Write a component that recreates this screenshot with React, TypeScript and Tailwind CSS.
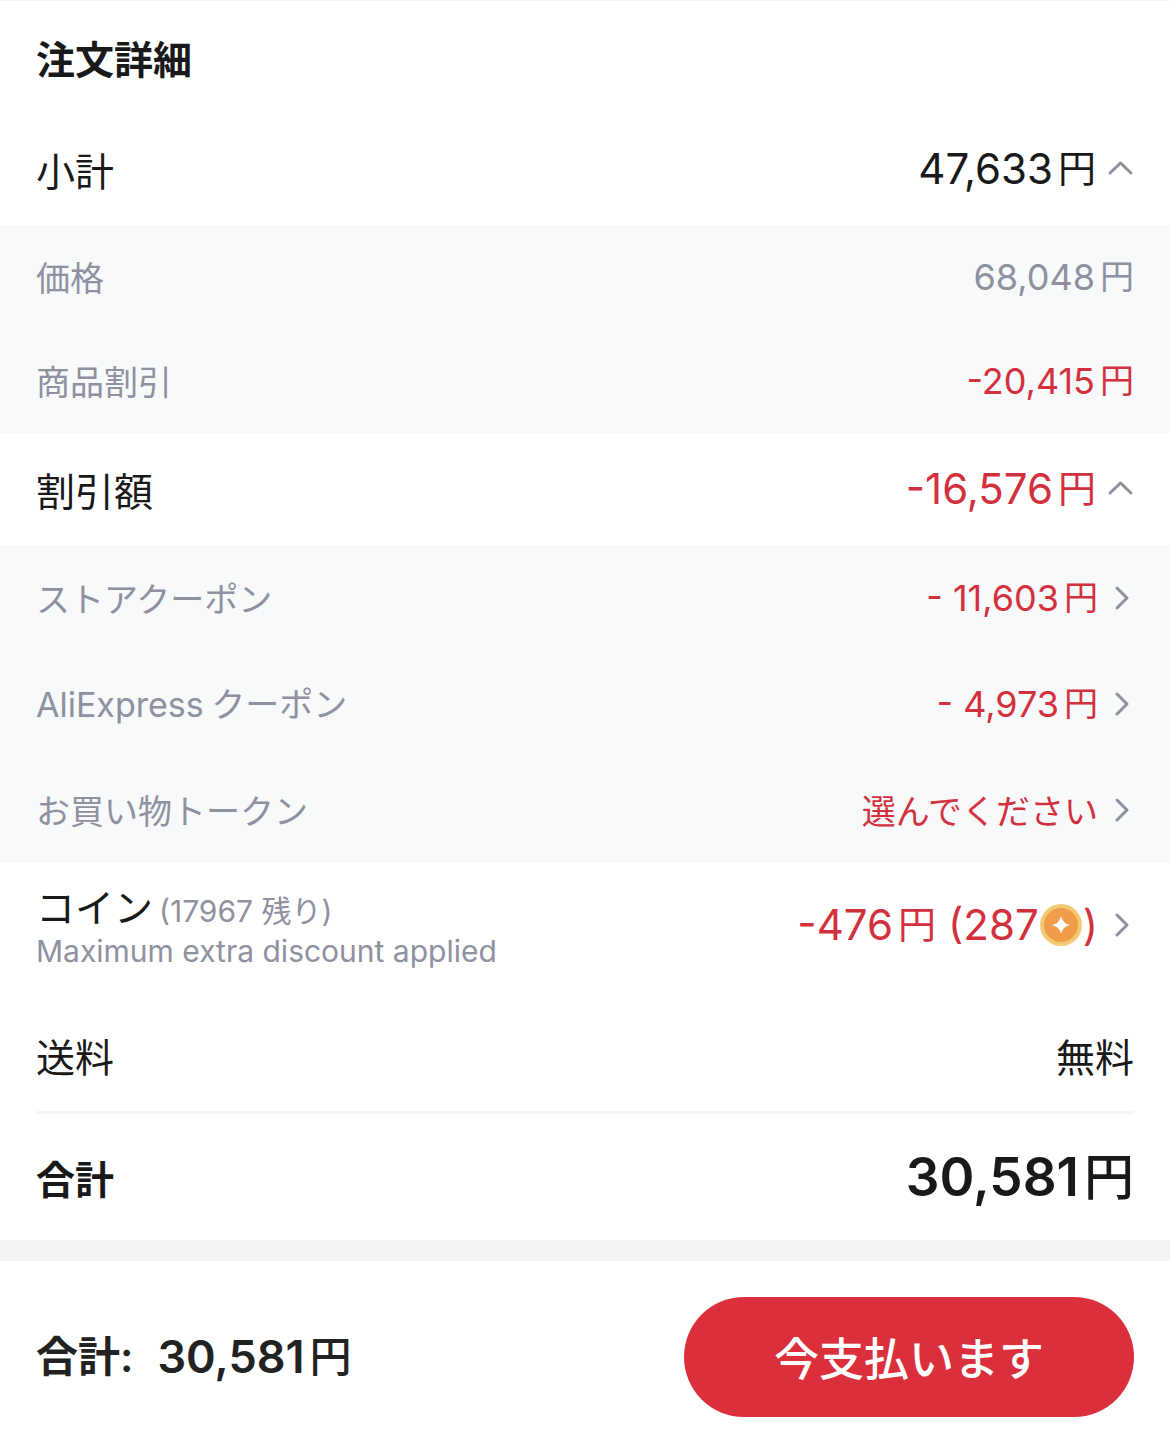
import type {ReactNode} from "react"

type Direction = "up" | "right"

function Chevron({direction}: {direction: Direction}) {
  return (
    <svg
      aria-hidden="true"
      className="h-7 w-7 shrink-0 text-[#8f909d]"
      fill="none"
      stroke="currentColor"
      strokeLinecap="round"
      strokeLinejoin="round"
      strokeWidth={3}
      viewBox="0 0 28 28"
    >
      <path d={direction === "up" ? "M4 18 14.5 8 25 18" : "M11 4 21 14 11 24"} />
    </svg>
  )
}

function Coin() {
  return (
    <svg aria-hidden="true" className="h-11 w-11 shrink-0" viewBox="0 0 44 44">
      <circle cx="22" cy="22" fill="#f3ca73" r="21" />
      <circle cx="22" cy="22" fill="#f09c49" r="17" />
      <path
        d="M22 13Q23.5 20.5 31 22Q23.5 23.5 22 31Q20.5 23.5 13 22Q20.5 20.5 22 13Z"
        fill="#fff"
      />
    </svg>
  )
}

/* Amount followed by the smaller yen character */
function Yen({amount, size}: {amount: string; size: string}) {
  return (
    <span className="flex items-center gap-[5px] whitespace-nowrap">
      <span>{amount}</span>
      <span className={size}>円</span>
    </span>
  )
}

/* Japanese captions use the metrics of the CJK face */
function Label({children, className}: {children: ReactNode; className: string}) {
  return (
    <span className={`font-['Noto_Sans_CJK_JP',sans-serif] ${className}`}>
      {children}
    </span>
  )
}

interface RowProps {
  children: ReactNode
  label: ReactNode
}

function SummaryRow({children, label}: RowProps) {
  return (
    <div className="flex h-28 items-center justify-between px-9">
      <Label className="text-[39px]">{label}</Label>
      <button className="flex items-center gap-2.5 text-[42px]" type="button">
        {children}
        <Chevron direction="up" />
      </button>
    </div>
  )
}

function DetailRow({children, label}: RowProps) {
  return (
    <div className="flex h-[104px] items-center justify-between px-9">
      <Label className="text-[34px] text-[#8f90a0]">{label}</Label>
      <span className="text-[36px]">{children}</span>
    </div>
  )
}

function CouponRow({children, label}: RowProps) {
  return (
    <button
      className="flex h-[106px] w-full items-center justify-between px-9"
      type="button"
    >
      <Label className="text-[34px] text-[#8f90a0]">{label}</Label>
      <span className="flex items-center gap-2 text-[36px] text-[#d3303e]">
        {children}
        <Chevron direction="right" />
      </span>
    </button>
  )
}

export default function App() {
  return (
    <main className="min-h-screen border-t border-[#f4f4f4] bg-white font-[Inter,'Noto_Sans_CJK_JP',sans-serif] leading-tight text-[#191919]">
      <h1 className="flex h-28 items-center px-9 font-bold">
        <Label className="text-[39px]">注文詳細</Label>
      </h1>

      <SummaryRow label="小計">
        <Yen amount="47,633" size="text-[38px]" />
      </SummaryRow>
      <section className="bg-[#f8f9fb]">
        <DetailRow label="価格">
          <span className="text-[#8f90a0]">
            <Yen amount="68,048" size="text-[34px]" />
          </span>
        </DetailRow>
        <DetailRow label="商品割引">
          <span className="text-[#d3303e]">
            <Yen amount="-20,415" size="text-[34px]" />
          </span>
        </DetailRow>
      </section>

      <SummaryRow label="割引額">
        <span className="text-[#d3303e]">
          <Yen amount="-16,576" size="text-[38px]" />
        </span>
      </SummaryRow>
      <section className="bg-[#f8f9fb]">
        <CouponRow label="ストアクーポン">
          <Yen amount="- 11,603" size="text-[34px]" />
        </CouponRow>
        <CouponRow
          label={
            <>
              <span className="font-[Inter,sans-serif]">AliExpress</span>{" "}
              クーポン
            </>
          }
        >
          <Yen amount="- 4,973" size="text-[34px]" />
        </CouponRow>
        <CouponRow label="お買い物トークン">
          <Label className="text-[34px]">選んでください</Label>
        </CouponRow>
      </section>

      <button
        className="flex h-[136px] w-full items-center justify-between px-9 pb-3 text-left"
        type="button"
      >
        <span className="pt-2">
          <span className="flex items-baseline gap-1.5 leading-10">
            <span className="text-[39px]">コイン</span>
            <span className="text-[30px] text-[#8f90a0]">(17967 残り)</span>
          </span>
          <span className="block text-[30px] leading-10 text-[#8f90a0]">
            Maximum extra discount applied
          </span>
        </span>
        <span className="flex items-center gap-2 text-[42px] text-[#d3303e]">
          <span className="flex items-center">
            <Yen amount="-476" size="text-[38px]" />
            <span className="ml-3">(287</span>
            <Coin />
            <span>)</span>
          </span>
          <Chevron direction="right" />
        </span>
      </button>

      <div className="mx-9 flex h-[115px] items-center justify-between border-b-3 border-[#f5f5f5]">
        <Label className="text-[39px]">送料</Label>
        <Label className="text-[39px]">無料</Label>
      </div>
      <div className="flex h-[126px] items-center justify-between px-9">
        <Label className="text-[39px] font-bold">合計</Label>
        <span className="text-[53px] font-semibold">
          <Yen amount="30,581" size="text-[50px] font-medium" />
        </span>
      </div>

      <footer className="flex items-center justify-between border-t-21 border-[#f4f4f4] px-9 py-9">
        <div className="flex items-center gap-6 font-semibold text-[#222]">
          <span className="text-[42px]">合計:</span>
          <span className="text-[45px]">
            <Yen amount="30,581" size="text-[42px] font-medium" />
          </span>
        </div>
        <button
          className="h-[120px] w-[450px] rounded-full bg-[#dc2f3c] text-white"
          type="button"
        >
          <Label className="text-[45px] font-medium">今支払います</Label>
        </button>
      </footer>
    </main>
  )
}
